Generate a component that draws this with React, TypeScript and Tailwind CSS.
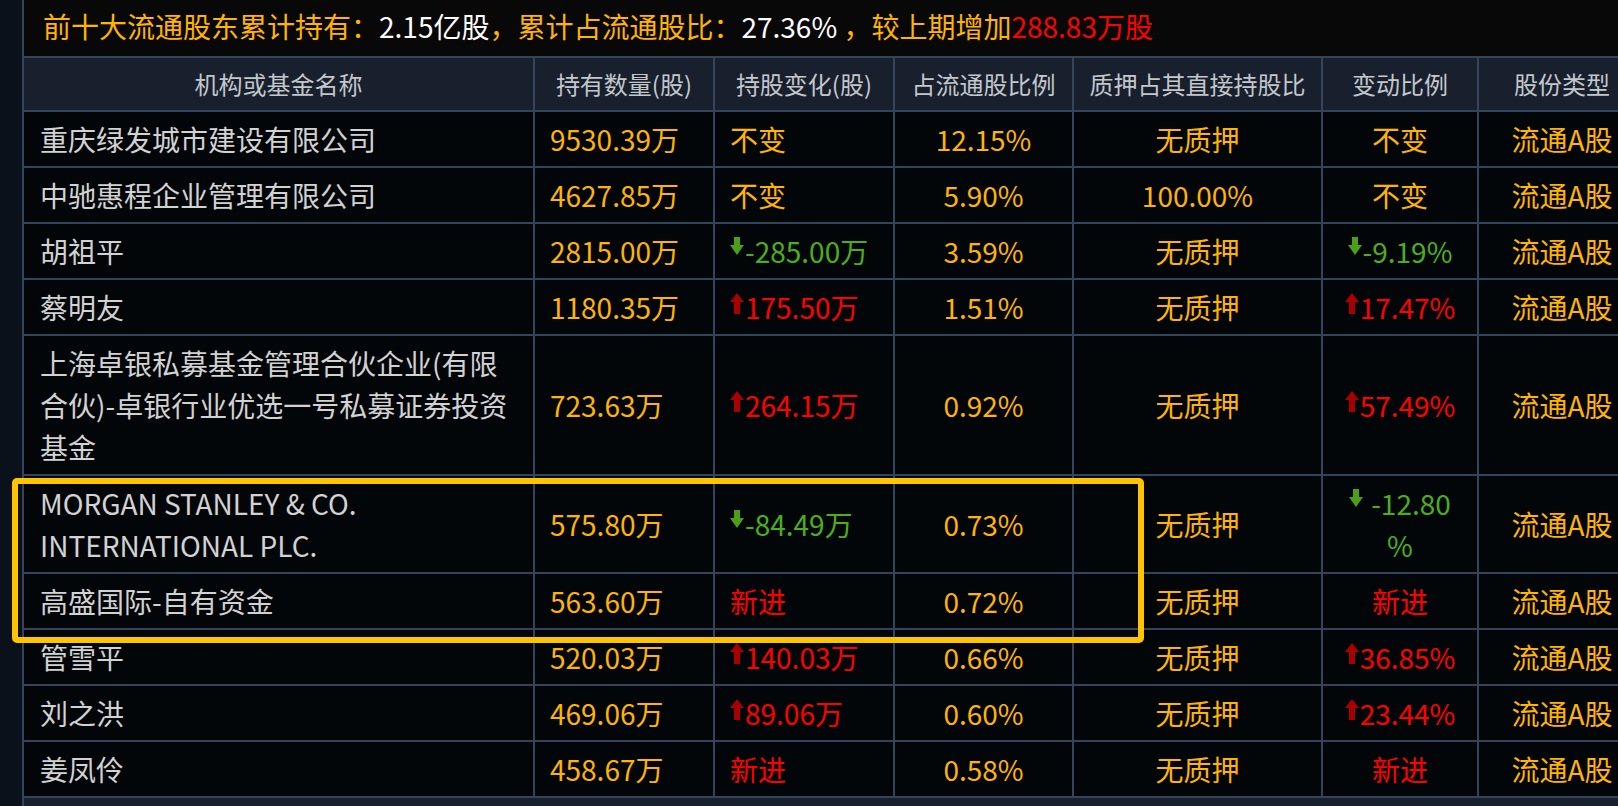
import { ReactNode } from "react";

type Trend = "up" | "down" | "same" | "new";

interface Holder {
  name: ReactNode;
  amount: string;
  change: string;
  changeTrend: Trend;
  ratio: string;
  pledge: string;
  rate: string;
  rateTrend: Trend;
  type: string;
  highlight?: boolean;
  rateWrap?: boolean;
}

const holders: Holder[] = [
  { name: "重庆绿发城市建设有限公司", amount: "9530.39万", change: "不变", changeTrend: "same", ratio: "12.15%", pledge: "无质押", rate: "不变", rateTrend: "same", type: "流通A股" },
  { name: "中驰惠程企业管理有限公司", amount: "4627.85万", change: "不变", changeTrend: "same", ratio: "5.90%", pledge: "100.00%", rate: "不变", rateTrend: "same", type: "流通A股", highlight: true },
  { name: "胡祖平", amount: "2815.00万", change: "-285.00万", changeTrend: "down", ratio: "3.59%", pledge: "无质押", rate: "-9.19%", rateTrend: "down", type: "流通A股" },
  { name: "蔡明友", amount: "1180.35万", change: "175.50万", changeTrend: "up", ratio: "1.51%", pledge: "无质押", rate: "17.47%", rateTrend: "up", type: "流通A股" },
  {
    name: (
      <>
        上海卓银私募基金管理合伙企业(有限
        <br />
        合伙)-卓银行业优选一号私募证券投资
        <br />
        基金
      </>
    ),
    amount: "723.63万", change: "264.15万", changeTrend: "up", ratio: "0.92%", pledge: "无质押", rate: "57.49%", rateTrend: "up", type: "流通A股",
  },
  {
    name: (
      <>
        MORGAN STANLEY &amp; CO.
        <br />
        INTERNATIONAL PLC.
      </>
    ),
    amount: "575.80万", change: "-84.49万", changeTrend: "down", ratio: "0.73%", pledge: "无质押",
    rate: "-12.80", rateTrend: "down", type: "流通A股", rateWrap: true,
  },
  { name: "高盛国际-自有资金", amount: "563.60万", change: "新进", changeTrend: "new", ratio: "0.72%", pledge: "无质押", rate: "新进", rateTrend: "new", type: "流通A股" },
  { name: "管雪平", amount: "520.03万", change: "140.03万", changeTrend: "up", ratio: "0.66%", pledge: "无质押", rate: "36.85%", rateTrend: "up", type: "流通A股" },
  { name: "刘之洪", amount: "469.06万", change: "89.06万", changeTrend: "up", ratio: "0.60%", pledge: "无质押", rate: "23.44%", rateTrend: "up", type: "流通A股" },
  { name: "姜凤伶", amount: "458.67万", change: "新进", changeTrend: "new", ratio: "0.58%", pledge: "无质押", rate: "新进", rateTrend: "new", type: "流通A股" },
];

const headers = ["机构或基金名称", "持有数量(股)", "持股变化(股)", "占流通股比例", "质押占其直接持股比", "变动比例", "股份类型"];

// chunky arrow icon drawn next to the change values
function Arrow({ dir }: { dir: "up" | "down" }) {
  if (dir === "up") {
    return (
      <svg width={14} height={21} viewBox="0 0 14 21" className="mr-[1px] mb-[8px] flex-none">
        <polygon points="7,0 14,9 10,9 10,21 4,21 4,9 0,9" fill="#a80000" />
      </svg>
    );
  }
  return (
    <svg width={14} height={18} viewBox="0 0 14 18" className="mr-[1px] mb-[10px] flex-none">
      <polygon points="4,0 10,0 10,8 14,8 7,18 0,8 4,8" fill="#4c9f18" />
    </svg>
  );
}

function trendColor(t: Trend) {
  if (t === "up" || t === "new") return "text-[#ff0000]";
  if (t === "down") return "text-[#4caf1a]";
  return "text-[#ffb400]";
}

function TrendValue({ trend, children, gap }: { trend: Trend; children: ReactNode; gap?: boolean }) {
  return (
    <div className={`flex items-center ${trendColor(trend)}`}>
      {(trend === "up" || trend === "down") && <Arrow dir={trend} />}
      {gap && <span className="w-[7px]" />}
      <span>{children}</span>
    </div>
  );
}

const cell = "bg-[#030609] py-[6px] text-[28px] leading-[42px] flex items-center";

export default function App() {
  return (
    <div className="relative h-[806px] w-full overflow-hidden bg-[#0b111b] font-['Noto_Sans_CJK_SC',sans-serif]">
      <div className="ml-[22px] flex min-h-full w-[1623px] flex-col gap-[2px] bg-[#34445a] pl-[2px]">
        <div className="flex h-[56px] items-center bg-[#080808] pb-[5px] pl-[19px] text-[28px] whitespace-nowrap">
          <span className="text-[#ffb400]">前十大流通股东累计持有：</span>
          <span className="text-white">2.15亿股</span>
          <span className="text-[#ffb400]">，累计占流通股比：</span>
          <span className="text-white">27.36%</span>
          <span className="text-[#ffb400]">&nbsp;，较上期增加</span>
          <span className="text-[#ff0000]">288.83万股</span>
        </div>

        <div className="grid grid-cols-[509px_178px_178px_177px_247px_154px_166px] gap-[2px]">
          {headers.map((h) => (
            <div key={h} className="flex h-[52px] items-center justify-center bg-[#18202d] text-[24px] text-[#c3c7cc] whitespace-nowrap">
              {h}
            </div>
          ))}

          {holders.map((r, i) => (
            <div key={i} className="contents">
              <div className={`${cell} pl-4 pr-4 text-[#d2d2d2] ${r.highlight ? "bg-[#1a1a1a]" : ""}`}>
                <span className="whitespace-nowrap">{r.name}</span>
              </div>
              <div className={`${cell} pl-[15px] text-[#ffb400] whitespace-nowrap`}>{r.amount}</div>
              <div className={`${cell} pl-[15px] whitespace-nowrap`}>
                <TrendValue trend={r.changeTrend}>{r.change}</TrendValue>
              </div>
              <div className={`${cell} justify-center text-[#ffb400]`}>{r.ratio}</div>
              <div className={`${cell} justify-center text-[#ffb400]`}>{r.pledge}</div>
              <div className={`${cell} justify-center whitespace-nowrap`}>
                {r.rateWrap ? (
                  <div className="flex flex-col items-center">
                    <TrendValue trend={r.rateTrend} gap>
                      {r.rate}
                    </TrendValue>
                    <span className={trendColor(r.rateTrend)}>%</span>
                  </div>
                ) : (
                  <TrendValue trend={r.rateTrend}>{r.rate}</TrendValue>
                )}
              </div>
              <div className={`${cell} justify-center text-[#ffb400] whitespace-nowrap`}>{r.type}</div>
            </div>
          ))}
        </div>

        <div className="h-[12px] bg-[#18202d]" />
      </div>

      <div className="pointer-events-none absolute left-[12px] top-[478px] h-[165px] w-[1132px] rounded-[5px] border-[6px] border-[#ffc400]" />
    </div>
  );
}
